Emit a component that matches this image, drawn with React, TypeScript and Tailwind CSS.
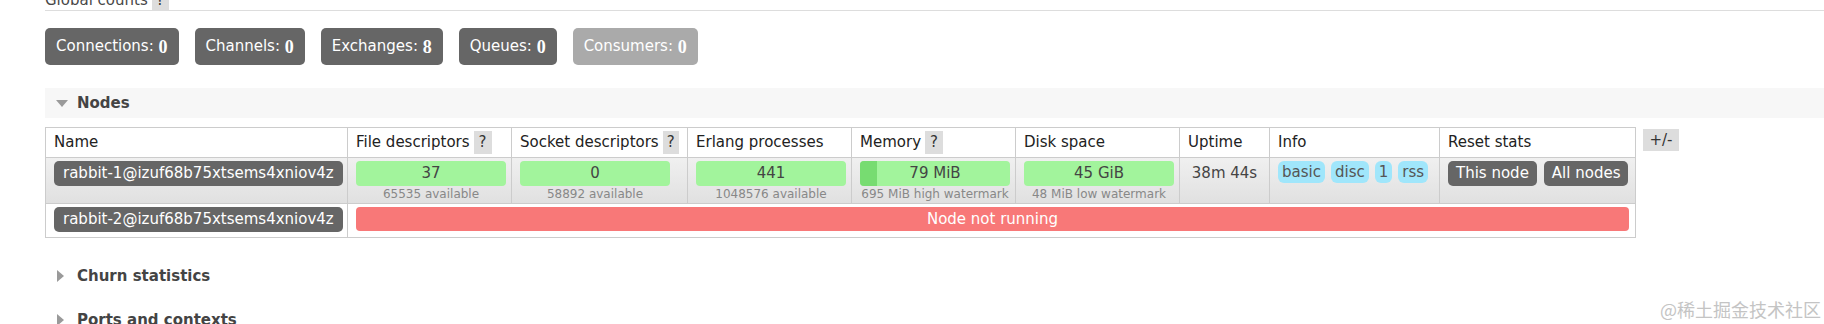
import React from 'react'

const counts = [
  { label: 'Connections', value: 0 },
  { label: 'Channels', value: 0 },
  { label: 'Exchanges', value: 8 },
  { label: 'Queues', value: 0 },
  { label: 'Consumers', value: 0, muted: true },
]

const columns = [
  { label: 'Name', width: 'w-[302px]' },
  { label: 'File descriptors', width: 'w-[164px]', help: true },
  { label: 'Socket descriptors', width: 'w-[176px]', help: true },
  { label: 'Erlang processes', width: 'w-[164px]' },
  { label: 'Memory', width: 'w-[164px]', help: true },
  { label: 'Disk space', width: 'w-[164px]' },
  { label: 'Uptime', width: 'w-[90px]' },
  { label: 'Info', width: 'w-[170px]' },
  { label: 'Reset stats', width: 'w-[196px]' },
]

function Help() {
  return (
    <span className="inline-flex w-[18px] h-[23px] items-center justify-center bg-[#dddddd] text-[#333]">?</span>
  )
}

function Bar({ value, sub, fill }: { value: string; sub: string; fill?: number }) {
  return (
    <div className="w-[150px]">
      <div className="relative h-[25px] rounded-[4px] overflow-hidden bg-[#a2f49c] flex items-center justify-center text-[#444]">
        {fill !== undefined && (
          <div className="absolute left-0 top-0 bottom-0 bg-[#77dc71]" style={{ width: `${fill * 100}%` }} />
        )}
        <span className="relative">{value}</span>
      </div>
      <div className="mt-[1px] text-[12px] leading-[14px] text-[#888] text-center whitespace-nowrap">{sub}</div>
    </div>
  )
}

function NamePill({ name }: { name: string }) {
  return (
    <span className="inline-flex h-[25px] items-center px-[9px] rounded-[5px] bg-[#666666] text-white whitespace-nowrap">
      {name}
    </span>
  )
}

function Section({ title, open }: { title: string; open?: boolean }) {
  return (
    <div className={`h-[30px] flex items-center ${open ? 'bg-[#f7f7f7]' : ''}`}>
      <div className="w-[32px] flex justify-center pl-[2px]">
        {open ? (
          <svg width="12" height="7" viewBox="0 0 12 7">
            <path d="M0 0 L12 0 L6 7 Z" fill="#9a9a9a" />
          </svg>
        ) : (
          <svg width="7" height="12" viewBox="0 0 7 12" className="-ml-[4px]">
            <path d="M0 0 L7 6 L0 12 Z" fill="#9a9a9a" />
          </svg>
        )}
      </div>
      <span className="font-bold text-[#444]">{title}</span>
    </div>
  )
}

export default function App() {
  const cell = 'align-top pt-[3px] pb-[2px] px-[8px] border border-[#cccccc]'
  return (
    <div className="relative w-[1824px] h-[324px] overflow-hidden bg-white pl-[45px] text-[15px] font-['DejaVu_Sans',Verdana,sans-serif] text-[#222]">
      <div className="-mt-[10px] h-[21px] flex items-center gap-[4px] border-b border-[#dddddd] text-[#484848]">
        <span>Global counts</span>
        <span className="inline-flex w-[17px] h-[20px] items-center justify-center bg-[#dddddd] text-[#333]">?</span>
      </div>

      <div className="mt-[17px] flex gap-[16px]">
        {counts.map((c) => (
          <div
            key={c.label}
            className={`h-[37px] px-[11px] rounded-[5px] flex items-center text-white whitespace-nowrap ${
              c.muted ? 'bg-[#aaaaaa]' : 'bg-[#666666]'
            }`}
          >
            {c.label}:&nbsp;
            <strong className="font-['Liberation_Serif',serif] text-[18px] leading-[18px] font-bold">{c.value}</strong>
          </div>
        ))}
      </div>

      <div className="mt-[23px]">
        <Section title="Nodes" open />
      </div>

      <div className="mt-[9px] flex items-start gap-[7px]">
        <table className="table-fixed border-collapse w-[1590px] border border-[#cccccc]">
          <colgroup>
            {columns.map((c) => (
              <col key={c.label} className={c.width} />
            ))}
          </colgroup>
          <thead>
            <tr>
              {columns.map((c) => (
                <th key={c.label} className="h-[30px] px-[8px] text-left font-normal border border-[#cccccc] whitespace-nowrap">
                  <div className="flex items-center gap-[4px]">
                    <span>{c.label}</span>
                    {c.help && <Help />}
                  </div>
                </th>
              ))}
            </tr>
          </thead>
          <tbody>
            <tr className="bg-gradient-to-b from-[#f0f0f0] to-[#e0e0e0]">
              <td className={cell}>
                <NamePill name="rabbit-1@izuf68b75xtsems4xniov4z" />
              </td>
              <td className={cell}>
                <Bar value="37" sub="65535 available" />
              </td>
              <td className={cell}>
                <Bar value="0" sub="58892 available" />
              </td>
              <td className={cell}>
                <Bar value="441" sub="1048576 available" />
              </td>
              <td className={cell}>
                <Bar value="79 MiB" sub="695 MiB high watermark" fill={79 / 695} />
              </td>
              <td className={cell}>
                <Bar value="45 GiB" sub="48 MiB low watermark" />
              </td>
              <td className={`${cell} text-center leading-[25px] text-[#444] whitespace-nowrap`}>38m 44s</td>
              <td className={cell}>
                <div className="flex gap-[6px]">
                  {['basic', 'disc', '1', 'rss'].map((t) => (
                    <span key={t} className="h-[22px] px-[4px] rounded-[6px] bg-[#a0e6fb] text-[#555] flex items-center">
                      {t}
                    </span>
                  ))}
                </div>
              </td>
              <td className={cell}>
                <div className="flex gap-[7px]">
                  {['This node', 'All nodes'].map((t) => (
                    <span key={t} className="h-[25px] px-[8px] rounded-[5px] bg-[#666666] text-white flex items-center whitespace-nowrap">
                      {t}
                    </span>
                  ))}
                </div>
              </td>
            </tr>
            <tr>
              <td className="align-top pt-[3px] pb-[5px] px-[8px] border border-[#cccccc]">
                <NamePill name="rabbit-2@izuf68b75xtsems4xniov4z" />
              </td>
              <td colSpan={8} className="align-top pt-[3px] pb-[5px] pl-[8px] pr-[6px] border border-[#cccccc]">
                <div className="h-[24px] rounded-[4px] bg-[#f87878] text-white flex items-center justify-center">
                  Node not running
                </div>
              </td>
            </tr>
          </tbody>
        </table>
        <div className="mt-[2px] w-[36px] h-[22px] bg-[#dddddd] flex items-center justify-center text-[#333]">+/-</div>
      </div>

      <div className="mt-[23px]">
        <Section title="Churn statistics" />
      </div>
      <div className="mt-[14px]">
        <Section title="Ports and contexts" />
      </div>

      <div className="absolute right-[3px] bottom-[5px] text-[18px] leading-[20px] text-[#c4c4c4] font-['Noto_Sans_CJK_SC',sans-serif]">
        @稀土掘金技术社区
      </div>
    </div>
  )
}
